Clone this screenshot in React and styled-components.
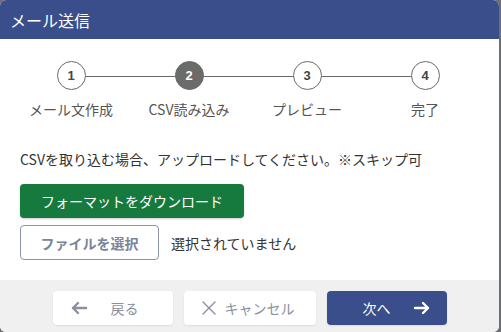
import React from "react";
import styled, { createGlobalStyle } from "styled-components";

const GlobalStyle = createGlobalStyle`
  html, body {
    margin: 0;
    padding: 0;
    background: #6d6f75;
  }
  body {
    font-family: "Noto Sans CJK JP", "Liberation Sans", sans-serif;
  }
`;

const Dialog = styled.div`
  width: 499px;
  height: 332px;
  background: #ffffff;
  border-radius: 6px;
  overflow: hidden;
  display: flex;
  flex-direction: column;
`;

const Header = styled.div`
  height: 39px;
  flex: none;
  background: #3a4e8b;
  color: #ffffff;
  font-size: 16px;
  display: flex;
  align-items: center;
  padding-left: 10px;
`;

const Body = styled.div`
  flex: 1;
  padding: 22px 20px 0;
`;

const Stepper = styled.div`
  position: relative;
  display: grid;
  grid-template-columns: repeat(4, 118px);
  margin-left: -8px;
`;

const StepLine = styled.div`
  position: absolute;
  top: 15px;
  left: 59px;
  width: 356px;
  height: 1px;
  background: #6a6a6a;
`;

const Step = styled.div`
  position: relative;
  display: flex;
  flex-direction: column;
  align-items: center;
`;

const Circle = styled.div`
  width: 29px;
  height: 29px;
  box-sizing: border-box;
  border-radius: 50%;
  border: 1px solid #6a6a6a;
  background: ${(p) => (p.$active ? "#6b6b6b" : "#ffffff")};
  color: ${(p) => (p.$active ? "#ffffff" : "#444444")};
  font-family: "Liberation Sans", sans-serif;
  font-weight: bold;
  font-size: 13px;
  display: flex;
  align-items: center;
  justify-content: center;
`;

const StepLabel = styled.div`
  margin-top: 9px;
  font-size: 14px;
  color: #555555;
  white-space: nowrap;
`;

const Note = styled.p`
  margin: 30px 0 0;
  font-size: 14px;
  color: #333333;
`;

const DownloadButton = styled.button`
  margin-top: 15px;
  width: 224px;
  height: 34px;
  border: none;
  border-radius: 4px;
  background: #167a3e;
  color: #ffffff;
  font-family: inherit;
  font-size: 14px;
  box-shadow: 0 1px 2px rgba(0, 0, 0, 0.2);
`;

const FileRow = styled.div`
  margin-top: 7px;
  display: flex;
  align-items: center;
  gap: 12px;
`;

const FileButton = styled.button`
  width: 139px;
  height: 35px;
  border: 1px solid #8b93a8;
  border-radius: 4px;
  background: #ffffff;
  color: #7b8499;
  font-family: inherit;
  font-weight: bold;
  font-size: 14px;
`;

const FileStatus = styled.span`
  font-size: 14px;
  color: #333333;
`;

const Footer = styled.div`
  flex: none;
  box-sizing: border-box;
  height: 52px;
  background: #f0f0f0;
  display: flex;
  justify-content: center;
  align-items: flex-start;
  padding-top: 11px;
  gap: 11px;
`;

const FooterButton = styled.button`
  width: ${(p) => p.$width}px;
  height: 34px;
  border: none;
  border-radius: 4px;
  background: ${(p) => (p.$primary ? "#3a4e8b" : "#ffffff")};
  color: ${(p) => (p.$primary ? "#ffffff" : "#8a90a0")};
  font-family: inherit;
  font-size: 14px;
  display: flex;
  align-items: center;
  justify-content: flex-start;
  padding: 0 0 0 ${(p) => p.$pad}px;
  gap: ${(p) => p.$gap}px;
  box-shadow: 0 1px 2px rgba(0, 0, 0, 0.08);
  svg {
    flex: none;
  }
`;

const steps = ["メール文作成", "CSV読み込み", "プレビュー", "完了"];

const ArrowLeft = () => (
  <svg width="18" height="14" viewBox="0 0 18 14" fill="none" stroke="#8a90a0" strokeWidth="2.4" strokeLinecap="round" strokeLinejoin="round">
    <path d="M16 7H3M8 2L3 7l5 5" />
  </svg>
);

const ArrowRight = () => (
  <svg width="18" height="14" viewBox="0 0 18 14" fill="none" stroke="#ffffff" strokeWidth="2.4" strokeLinecap="round" strokeLinejoin="round">
    <path d="M2 7h13M10 2l5 5-5 5" />
  </svg>
);

const Cross = () => (
  <svg width="16" height="16" viewBox="0 0 16 16" fill="none" stroke="#8a90a0" strokeWidth="1.4" strokeLinecap="round">
    <path d="M2 2l12 12M14 2L2 14" />
  </svg>
);

const App = () => {
  return (
    <>
      <GlobalStyle />
      <Dialog>
        <Header>メール送信</Header>
        <Body>
          <Stepper>
            <StepLine />
            {steps.map((label, i) => (
              <Step key={label}>
                <Circle $active={i === 1}>{i + 1}</Circle>
                <StepLabel>{label}</StepLabel>
              </Step>
            ))}
          </Stepper>
          <Note>CSVを取り込む場合、アップロードしてください。※スキップ可</Note>
          <DownloadButton>フォーマットをダウンロード</DownloadButton>
          <FileRow>
            <FileButton>ファイルを選択</FileButton>
            <FileStatus>選択されていません</FileStatus>
          </FileRow>
        </Body>
        <Footer>
          <FooterButton $width={120} $pad={17} $gap={23}>
            <ArrowLeft />
            戻る
          </FooterButton>
          <FooterButton $width={132} $pad={17} $gap={8}>
            <Cross />
            キャンセル
          </FooterButton>
          <FooterButton $width={120} $pad={36} $gap={22} $primary>
            次へ
            <ArrowRight />
          </FooterButton>
        </Footer>
      </Dialog>
    </>
  );
};

export default App;
